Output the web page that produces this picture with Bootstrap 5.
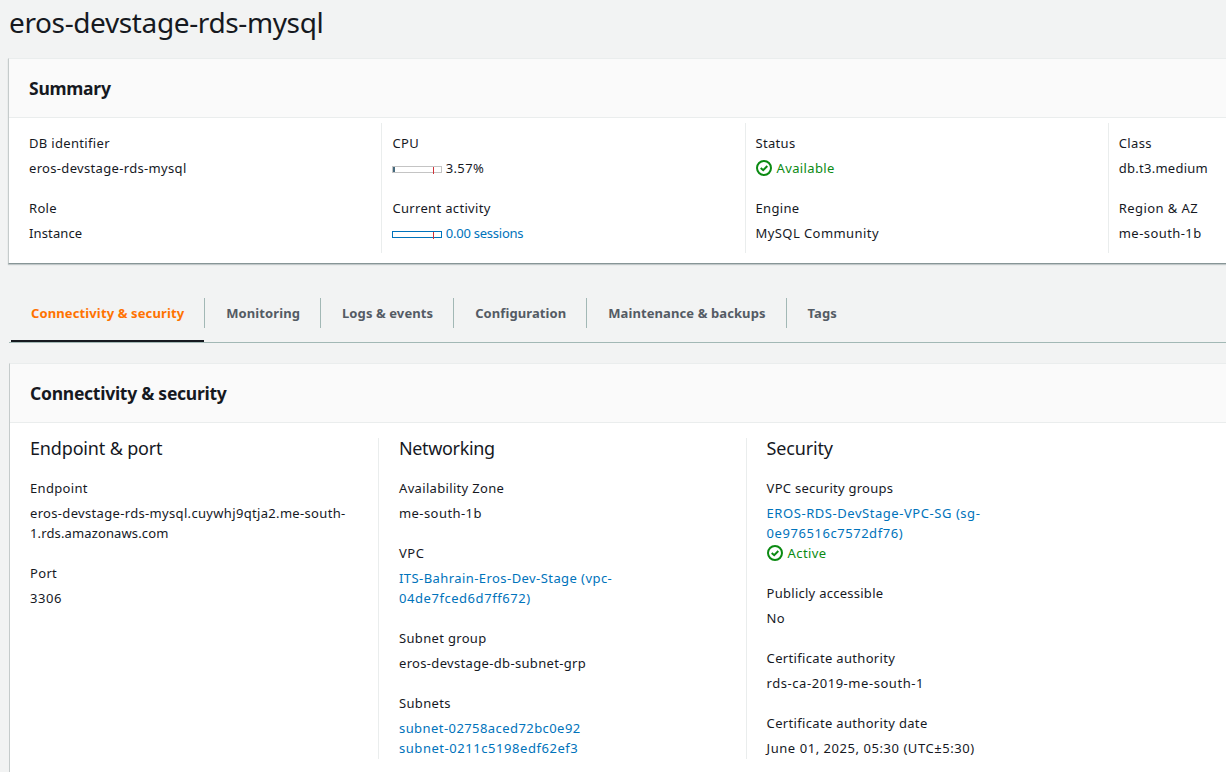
<!DOCTYPE html>
<html lang="en">
<head>
<meta charset="utf-8">
<meta name="viewport" content="width=device-width, initial-scale=1">
<title>eros-devstage-rds-mysql</title>
<link href="https://cdn.jsdelivr.net/npm/bootstrap@5.3.0/dist/css/bootstrap.min.css" rel="stylesheet">
<style>
  body { background: #f2f3f3; color: #16191f; font: 400 13px/20px "Noto Sans", "Open Sans", sans-serif; letter-spacing: .33px; height: 772px; overflow: hidden; }
  a { color: #0073bb; text-decoration: none; }
  h1 { font-size: 28px; line-height: 36px; letter-spacing: -.38px; margin: 4px 0 0 9px; height: 55px; font-weight: 400; }
  .panel { background: #fff; border: 0; border-left: 1px solid #c5cbcb; border-top: 1px solid #eaeded; border-radius: 0; }
  .panel-summary { margin-left: 8px; height: 206px; border-bottom: 1px solid #879596; box-shadow: 0 1px 1px rgba(0,28,36,.2); margin-top: -1px; }
  .panel-detail { margin-left: 9px; height: 420px; margin-top: 20px; }
  .panel-head { background: #fafafa; border-bottom: 1px solid #eaeded; height: 59px; padding: 0 20px; }
  .panel-head h2 { font-size: 17.5px; line-height: 22px; font-weight: 700; letter-spacing: -.26px; margin: 0; }
  .summary-grid { display: grid; grid-template-columns: 372.4px 363.5px 363.3px minmax(0, 1fr); padding-top: 5px; }
  .summary-grid > div { height: 130px; padding: 10px 0 0 10px; border-left: 1px solid #eaeded; }
  .summary-grid > div:nth-child(n+3) { padding-left: 9.6px; }
  .summary-grid > div:first-child { padding-left: 20px; border-left: 0; }
  .detail-grid { display: grid; grid-template-columns: 368px 368px 368px; padding-top: 15px; }
  .detail-grid > div { height: 321px; padding: 0 0 0 20px; border-left: 1px solid #eaeded; }
  .detail-grid > div:first-child { border-left: 0; }
  .detail-grid > div:last-child { padding-left: 19.6px; }
  .detail-grid h3 { font-size: 18px; line-height: 22px; font-weight: 400; margin: -1px 0 19px; letter-spacing: -.16px; }
  .detail-grid .head-tight { letter-spacing: -.36px; }
  dl, dt, dd { margin: 0; font-weight: 400; }
  dd { margin: 5px 0 20px; }
  dt { line-height: 20px; }
  .track-wide { letter-spacing: .55px; }
  .track-mid { letter-spacing: .43px; }
  .track-soft { letter-spacing: .26px; }
  .track-narrow { letter-spacing: .13px; }
  .track-tight { letter-spacing: -.24px; }
  .ok { color: #0b8a12; letter-spacing: .38px; }
  .ok svg { width: 16px; height: 16px; margin: 0 4.6px 0 .4px; flex: none; }
  .meter-box { position: relative; width: 50px; height: 7px; border: 1px solid #c4c4c4; margin: 3px 3.4px 0 0; background: #fff; }
  .meter-box.linked { border-color: #0073bb; }
  .meter-box .fill { height: 5px; background: #44697d; }
  .meter-box::after { content: ""; position: absolute; left: 40px; top: 0; width: 1px; height: 7px; background: #d13239; }
  .tabs { margin: 34px 0 0 9px; height: 45px; border-bottom: 1px solid #a2b8b5; padding-left: 2px; align-items: flex-start; }
  .tabs .nav-link { color: #545b64; font-weight: 700; padding: 5px 20px 5px 21px; border-radius: 0; letter-spacing: .09px; line-height: 20px; height: 30px; border-left: 1px solid #a2b8b5; white-space: nowrap; }
  .tabs .nav-link.active { color: #ff7200; border-left: 0; padding-left: 20px; height: 44px; border-bottom: 2px solid #16191f; letter-spacing: .12px; }
</style>
</head>
<body>
<h1>eros-devstage-rds-mysql</h1>

<section class="card panel panel-summary">
  <div class="panel-head d-flex align-items-center"><h2>Summary</h2></div>
  <div class="summary-grid">
    <div><dl>
      <dt>DB identifier</dt><dd>eros-devstage-rds-mysql</dd>
      <dt>Role</dt><dd class="track-narrow">Instance</dd>
    </dl></div>
    <div><dl>
      <dt>CPU</dt>
      <dd class="d-flex align-items-center"><span class="meter-box"><span class="fill d-block" style="width:3.57%"></span></span>3.57%</dd>
      <dt>Current activity</dt>
      <dd><a href="#" class="d-flex align-items-center track-tight"><span class="meter-box linked"></span>0.00 sessions</a></dd>
    </dl></div>
    <div><dl>
      <dt>Status</dt>
      <dd class="ok d-flex align-items-center"><svg viewBox="0 0 16 16" fill="none" stroke="currentColor" stroke-width="2"><circle cx="8" cy="8" r="7"/><path d="M4.7 8 7.2 10.2 11.3 6"/></svg>Available</dd>
      <dt>Engine</dt><dd class="track-mid">MySQL Community</dd>
    </dl></div>
    <div><dl>
      <dt>Class</dt><dd class="track-soft">db.t3.medium</dd>
      <dt class="track-mid">Region &amp; AZ</dt><dd class="track-mid">me-south-1b</dd>
    </dl></div>
  </div>
</section>

<nav class="nav flex-nowrap tabs">
  <a class="nav-link active" href="#">Connectivity &amp; security</a>
  <a class="nav-link" href="#">Monitoring</a>
  <a class="nav-link" href="#">Logs &amp; events</a>
  <a class="nav-link" href="#">Configuration</a>
  <a class="nav-link" href="#">Maintenance &amp; backups</a>
  <a class="nav-link" href="#">Tags</a>
</nav>

<section class="card panel panel-detail">
  <div class="panel-head d-flex align-items-center"><h2>Connectivity &amp; security</h2></div>
  <div class="detail-grid">
    <div>
      <h3>Endpoint &amp; port</h3>
      <dl>
        <dt>Endpoint</dt>
        <dd><span class="text-nowrap">eros-devstage-rds-mysql.cuywhj9qtja2.me-south-</span><br><span class="track-narrow">1.rds.amazonaws.com</span></dd>
        <dt>Port</dt><dd class="track-wide">3306</dd>
      </dl>
    </div>
    <div>
      <h3 class="head-tight">Networking</h3>
      <dl>
        <dt>Availability Zone</dt><dd class="track-mid">me-south-1b</dd>
        <dt class="track-wide">VPC</dt>
        <dd><a href="#"><span class="track-mid">ITS-Bahrain-Eros-Dev-Stage (vpc-</span><br><span class="track-wide">04de7fced6d7ff672)</span></a></dd>
        <dt>Subnet group</dt><dd>eros-devstage-db-subnet-grp</dd>
        <dt>Subnets</dt>
        <dd><a href="#" class="track-mid">subnet-02758aced72bc0e92</a><br><a href="#" class="track-wide">subnet-0211c5198edf62ef3</a></dd>
      </dl>
    </div>
    <div>
      <h3>Security</h3>
      <dl>
        <dt class="track-soft">VPC security groups</dt>
        <dd><a href="#" class="track-wide">EROS-RDS-DevStage-VPC-SG (sg-<br>0e976516c7572df76)</a>
          <div class="ok d-flex align-items-center"><svg viewBox="0 0 16 16" fill="none" stroke="currentColor" stroke-width="2"><circle cx="8" cy="8" r="7"/><path d="M4.7 8 7.2 10.2 11.3 6"/></svg>Active</div></dd>
        <dt class="track-soft">Publicly accessible</dt><dd>No</dd>
        <dt>Certificate authority</dt><dd class="track-wide">rds-ca-2019-me-south-1</dd>
        <dt>Certificate authority date</dt><dd class="track-wide">June 01, 2025, 05:30 (UTC±5:30)</dd>
      </dl>
    </div>
  </div>
</section>
<script src="https://cdn.jsdelivr.net/npm/bootstrap@5.3.0/dist/js/bootstrap.bundle.min.js"></script>
</body>
</html>
